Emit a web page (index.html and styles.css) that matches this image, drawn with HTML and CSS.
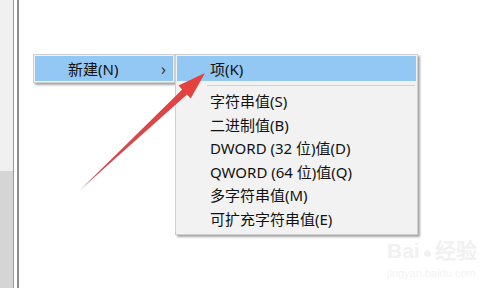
FILE: index.html
```html
<!DOCTYPE html>
<html lang="zh-CN">
<head>
    <meta charset="UTF-8">
    <title>新建</title>
    <link rel="stylesheet" href="styles.css">
</head>
<body>
    <div class="window">
        <div class="sidebar">
            <div class="sidebar-top"></div>
            <div class="sidebar-bottom"></div>
        </div>
        <div class="divider"></div>
        <div class="content">
            <div class="menu main-menu">
                <div class="item active">
                    <span class="label">新建(N)</span>
                    <span class="more">›</span>
                </div>
            </div>

            <div class="menu sub-menu">
                <div class="item active"><span class="label">项(K)</span></div>
                <div class="sep"></div>
                <div class="item"><span class="label">字符串值(S)</span></div>
                <div class="item"><span class="label">二进制值(B)</span></div>
                <div class="item"><span class="label">DWORD (32 位)值(D)</span></div>
                <div class="item"><span class="label">QWORD (64 位)值(Q)</span></div>
                <div class="item"><span class="label">多字符串值(M)</span></div>
                <div class="item"><span class="label">可扩充字符串值(E)</span></div>
            </div>

            <!-- red pointer drawn over the menu -->
            <svg class="pointer" width="500" height="288" viewBox="0 0 500 288">
                <defs>
                    <linearGradient id="red" x1="80" y1="190" x2="205" y2="73" gradientUnits="userSpaceOnUse">
                        <stop offset="0" stop-color="#c8505a"/>
                        <stop offset="1" stop-color="#e8403a"/>
                    </linearGradient>
                </defs>
                <polygon fill="url(#red)" points="80,190 182.2,89.4 178.5,85.4 205,73 190.7,98.6 187,94.6"/>
            </svg>

            <div class="watermark">
                <div class="wm-logo">Bai<span class="paw">●</span>经验</div>
                <div class="wm-url">jingyan.baidu.com</div>
            </div>
        </div>
    </div>
</body>
</html>
```

FILE: styles.css
```css
body {
    margin: 0;
    background: #fff;
    font-family: "Noto Sans", "Noto Sans CJK SC", sans-serif;
}
.window {
    display: flex;
    height: 288px;
    width: 500px;
    overflow: hidden;
}
.sidebar {
    width: 13px;
    display: flex;
    flex-direction: column;
    border-right: 1px solid #9a9a9a;
}
.sidebar-top {
    height: 171px;
    background: #f0f0f0;
}
.sidebar-bottom {
    flex: 1;
    background: #d5d5d5;
}
.divider {
    width: 3px;
    border-right: 2px solid #8c8c8c;
    background: #fff;
}
.content {
    flex: 1;
    position: relative;
}
.menu {
    position: absolute;
    box-sizing: border-box;
    background: #f2f2f2;
    border: 1px solid #cfcfcf;
    padding: 1px;
    box-shadow: 2px 2px 2px rgba(0, 0, 0, 0.35);
    font-size: 15px;
    color: #111;
}
.main-menu {
    left: 14px;
    top: 54px;
    width: 142px;
}
.sub-menu {
    left: 156px;
    top: 54px;
    width: 243px;
    padding-bottom: 4px;
}
.item {
    display: flex;
    align-items: center;
    height: 23.5px;
    padding-left: 33px;
}
.item.active {
    background: #93c7f4;
    height: 25px;
}
.label {
    flex: 1;
    white-space: nowrap;
}
.more {
    width: 12px;
    font-size: 16px;
    color: #333;
}
.sep {
    height: 1px;
    background: #d0d0d0;
    margin: 4px 1px 3px 30px;
}
.pointer {
    position: absolute;
    left: -19px;
    top: 0;
}
.watermark {
    position: absolute;
    left: 368px;
    top: 238px;
    color: #f1f1f1;
    font-family: "Liberation Sans", sans-serif;
}
.wm-logo {
    font-size: 21px;
    font-weight: bold;
    line-height: 26px;
}
.paw {
    font-size: 15px;
    margin: 0 3px;
}
.wm-url {
    font-size: 11px;
    line-height: 14px;
    color: #f3f3f3;
}
```
